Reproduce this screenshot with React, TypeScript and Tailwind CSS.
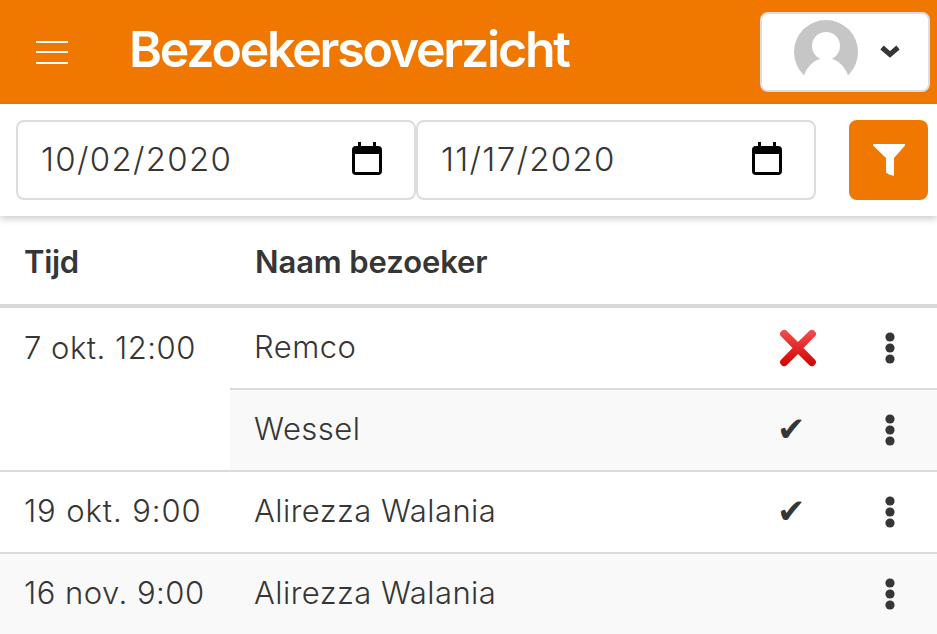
import React from "react"

const font = "font-['Inter','Liberation_Sans',sans-serif]"

const CalendarIcon = () => (
  <svg width="32" height="34" viewBox="0 0 32 34" className="shrink-0 -translate-y-px">
    <path d="M7 0h3v4h12V0h3v4h2a4 4 0 0 1 4 4v21a4 4 0 0 1-4 4H5a4 4 0 0 1-4-4V8a4 4 0 0 1 4-4h2z" fill="#000" />
    <rect x="4" y="12" width="24" height="18" fill="#fff" />
  </svg>
)

const DateField = ({ value }: { value: string }) => (
  <div className="flex h-20 w-[400px] items-center justify-between rounded-lg border-2 border-[#dddddd] bg-white pr-[31px] pl-6 text-[33px] font-light text-[#363636]">
    <span className="-translate-x-px tracking-[1.3px]">{value}</span>
    <CalendarIcon />
  </div>
)

const Kebab = () => (
  <svg width="12" height="34" viewBox="0 0 12 34" className="mx-auto translate-x-px">
    <circle cx="6" cy="6" r="4.6" fill="#363636" />
    <circle cx="6" cy="17" r="4.6" fill="#363636" />
    <circle cx="6" cy="28" r="4.6" fill="#363636" />
  </svg>
)

const Cross = () => (
  <svg width="38" height="38" viewBox="0 0 38 38" className="ml-[9px]">
    <defs>
      <linearGradient id="crossFill" x1="0" y1="0" x2="0" y2="1">
        <stop offset="0" stopColor="#f25050" />
        <stop offset="1" stopColor="#d40000" />
      </linearGradient>
    </defs>
    <path
      d="M3 1.500a3.500 3.500 0 0 1 4.600.3L19 13l11.400-11.200a3.500 3.500 0 0 1 4.600-.3l1.200 1.200a3.500 3.500 0 0 1-.2 4.600L24.500 19 36 30.700a3.500 3.500 0 0 1 .2 4.600L35 36.500a3.500 3.500 0 0 1-4.600-.3L19 25 7.600 36.200a3.500 3.500 0 0 1-4.600.3l-1.200-1.200a3.500 3.500 0 0 1 .2-4.600L13.500 19 2 7.300a3.500 3.500 0 0 1-.2-4.600z"
      fill="url(#crossFill)"
    />
  </svg>
)

const Check = () => (
  <span className="ml-[7px] font-['DejaVu_Sans',sans-serif] text-[34px] leading-none text-[#363636]">✔</span>
)

const rowCell = "h-[82px] border-b-2 border-[#dbdbdb] align-middle"

export default function App() {
  return (
    <div className={`h-[634px] w-[937px] overflow-hidden bg-white ${font}`}>
      <header className="flex h-[104px] items-center bg-[#f07800] pr-[7px] pl-9">
        <div className="flex w-8 flex-col gap-[8.5px]">
          <span className="h-[2px] bg-white" />
          <span className="h-[2px] bg-white" />
          <span className="h-[2px] bg-white" />
        </div>
        <h1 className="mb-[5px] ml-[61px] text-[50px] font-semibold tracking-[-2.2px] text-white">Bezoekersoverzicht</h1>
        <button className="ml-auto flex h-20 w-[170px] items-center rounded-lg border-2 border-[#dddddd] bg-white pl-[32px]">
          <svg width="64" height="64" viewBox="0 0 64 64">
            <circle cx="32" cy="32" r="32" fill="#c6c6c6" />
            <circle cx="32" cy="26" r="14" fill="#fff" />
            <path d="M10 55c4-10 12-17 22-17s18 7 22 17l-6 9H16z" fill="#fff" />
          </svg>
          <svg width="22" height="16" viewBox="0 0 22 16" className="ml-[21px]">
            <path d="M3 3.500l8 7 8-7" fill="none" stroke="#363636" strokeWidth="5" />
          </svg>
        </button>
      </header>

      <div className="flex h-[112px] items-center pr-[9px] pl-4 shadow-[0_3px_7px_rgba(0,0,0,0.2)]">
        <DateField value="10/02/2020" />
        <DateField value="11/17/2020" />
        <button className="ml-auto flex h-20 w-[79px] items-center justify-center rounded-lg bg-[#f07800]">
          <svg width="32" height="32" viewBox="0 0 32 32">
            <path d="M0 0h32v1.500L21 14v18l-5-1.500-3-2V14L0 1.500z" fill="#fff" />
          </svg>
        </button>
      </div>

      <table className="mt-2 w-full table-fixed border-separate border-spacing-0 text-[31px] font-light text-[#363636]">
        <colgroup>
          <col className="w-[230px]" />
          <col />
          <col className="w-[70px]" />
          <col className="w-[97px]" />
        </colgroup>
        <thead>
          <tr>
            <th className="h-[84px] border-b-4 border-[#d9d9d9] pb-1 pl-6 text-left font-semibold tracking-[-0.3px]">Tijd</th>
            <th className="h-[84px] border-b-4 border-[#d9d9d9] pb-1 pl-[25px] text-left font-semibold tracking-[-0.1px]">Naam bezoeker</th>
            <th className="border-b-4 border-[#d9d9d9]" />
            <th className="border-b-4 border-[#d9d9d9]" />
          </tr>
        </thead>
        <tbody>
          <tr>
            <td rowSpan={2} className="border-b-2 border-[#dbdbdb] pt-[17px] pl-6 align-top tracking-[0.5px]">7 okt. 12:00</td>
            <td className={`${rowCell} pb-[2px] pl-[24px] tracking-[0.5px]`}>Remco</td>
            <td className={rowCell}><Cross /></td>
            <td className={rowCell}><Kebab /></td>
          </tr>
          <tr className="bg-[#f9f9f9]">
            <td className={`${rowCell} pb-[2px] pl-[24px] tracking-[0.5px]`}>Wessel</td>
            <td className={rowCell}><Check /></td>
            <td className={rowCell}><Kebab /></td>
          </tr>
          <tr>
            <td className={`${rowCell} pb-[2px] pl-6 tracking-[0.9px]`}>19 okt. 9:00</td>
            <td className={`${rowCell} pb-[2px] pl-[24px] tracking-[0.45px]`}>Alirezza Walania</td>
            <td className={rowCell}><Check /></td>
            <td className={rowCell}><Kebab /></td>
          </tr>
          <tr className="bg-[#f9f9f9]">
            <td className="h-20 pb-[2px] pl-6 align-middle tracking-[0.5px]">16 nov. 9:00</td>
            <td className="h-20 pb-[2px] pl-[24px] align-middle tracking-[0.45px]">Alirezza Walania</td>
            <td />
            <td className="align-middle"><Kebab /></td>
          </tr>
        </tbody>
      </table>
    </div>
  )
}
